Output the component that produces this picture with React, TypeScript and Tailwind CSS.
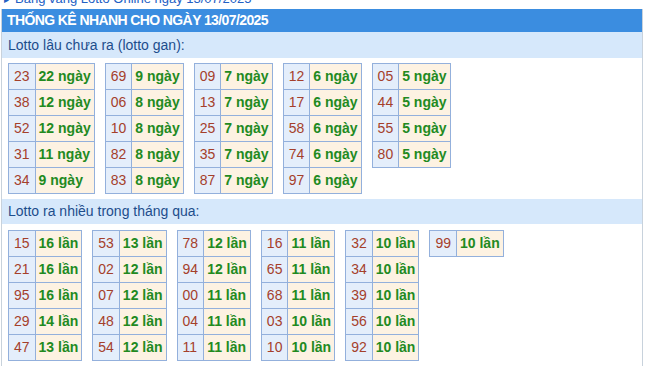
import React from 'react';

type Row = [string, number];

const lauChuaRa: Row[][] = [
  [['23', 22], ['38', 12], ['52', 12], ['31', 11], ['34', 9]],
  [['69', 9], ['06', 8], ['10', 8], ['82', 8], ['83', 8]],
  [['09', 7], ['13', 7], ['25', 7], ['35', 7], ['87', 7]],
  [['12', 6], ['17', 6], ['58', 6], ['74', 6], ['97', 6]],
  [['05', 5], ['44', 5], ['55', 5], ['80', 5]],
];

const raNhieu: Row[][] = [
  [['15', 16], ['21', 16], ['95', 16], ['29', 14], ['47', 13]],
  [['53', 13], ['02', 12], ['07', 12], ['48', 12], ['54', 12]],
  [['78', 12], ['94', 12], ['00', 11], ['04', 11], ['11', 11]],
  [['16', 11], ['65', 11], ['68', 11], ['03', 10], ['10', 10]],
  [['32', 10], ['34', 10], ['39', 10], ['56', 10], ['92', 10]],
  [['99', 10]],
];

const StatTable = ({ rows, unit }: { rows: Row[]; unit: string }) => (
  <table className="border-collapse text-[14px]">
    <tbody>
      {rows.map(([so, count]) => (
        <tr key={so}>
          <td className="border border-[#93b0dc] bg-[#e4eefb] px-[5px] py-0 leading-[25px] text-[#a4402b]">
            {so}
          </td>
          <td className="border border-[#93b0dc] bg-[#fdf2e2] px-[3px] py-0 leading-[25px] font-bold text-[#228a1f] whitespace-nowrap">
            {count} {unit}
          </td>
        </tr>
      ))}
    </tbody>
  </table>
);

const SubHeader = ({ children, className = '' }: { children: React.ReactNode; className?: string }) => (
  <div className={`flex items-center bg-[#d6e8fb] pl-[6px] text-[14px] text-[#1d4d8c] ${className}`}>
    {children}
  </div>
);

export default function App() {
  return (
    <div className="h-[366px] w-[650px] overflow-hidden bg-white [font-family:'Liberation_Sans',Arial,sans-serif]">
      {/* dòng tiêu đề phía trên, bị cắt */}
      <div className="h-[9px] overflow-hidden">
        <p className="-mt-[8px] pl-[4px] text-[13px] leading-[13px] text-[#2360c4] whitespace-nowrap">
          <span className="mr-[6px] text-[10px]">▸</span>Bảng vàng Lotto Online ngày 13/07/2025
        </p>
      </div>

      <div className="ml-[1px] h-[357px] w-[642px] border-x border-[#c8d2dc]">
        <div className="flex h-[23px] items-center bg-[#3b8de0] pl-[5px] text-[14px] font-bold tracking-[-0.6px] text-white">
          THỐNG KÊ NHANH CHO NGÀY 13/07/2025
        </div>

        <SubHeader className="h-[26px]">Lotto lâu chưa ra (lotto gan):</SubHeader>
        <div className="flex items-start gap-[10px] pl-[6px] pt-[5px] pb-[5px]">
          {lauChuaRa.map((rows, i) => (
            <StatTable key={i} rows={rows} unit="ngày" />
          ))}
        </div>

        <SubHeader className="h-[25px]">Lotto ra nhiều trong tháng qua:</SubHeader>
        <div className="flex items-start gap-[10px] pl-[6px] pt-[6px]">
          {raNhieu.map((rows, i) => (
            <StatTable key={i} rows={rows} unit="lần" />
          ))}
        </div>
      </div>
    </div>
  );
}
